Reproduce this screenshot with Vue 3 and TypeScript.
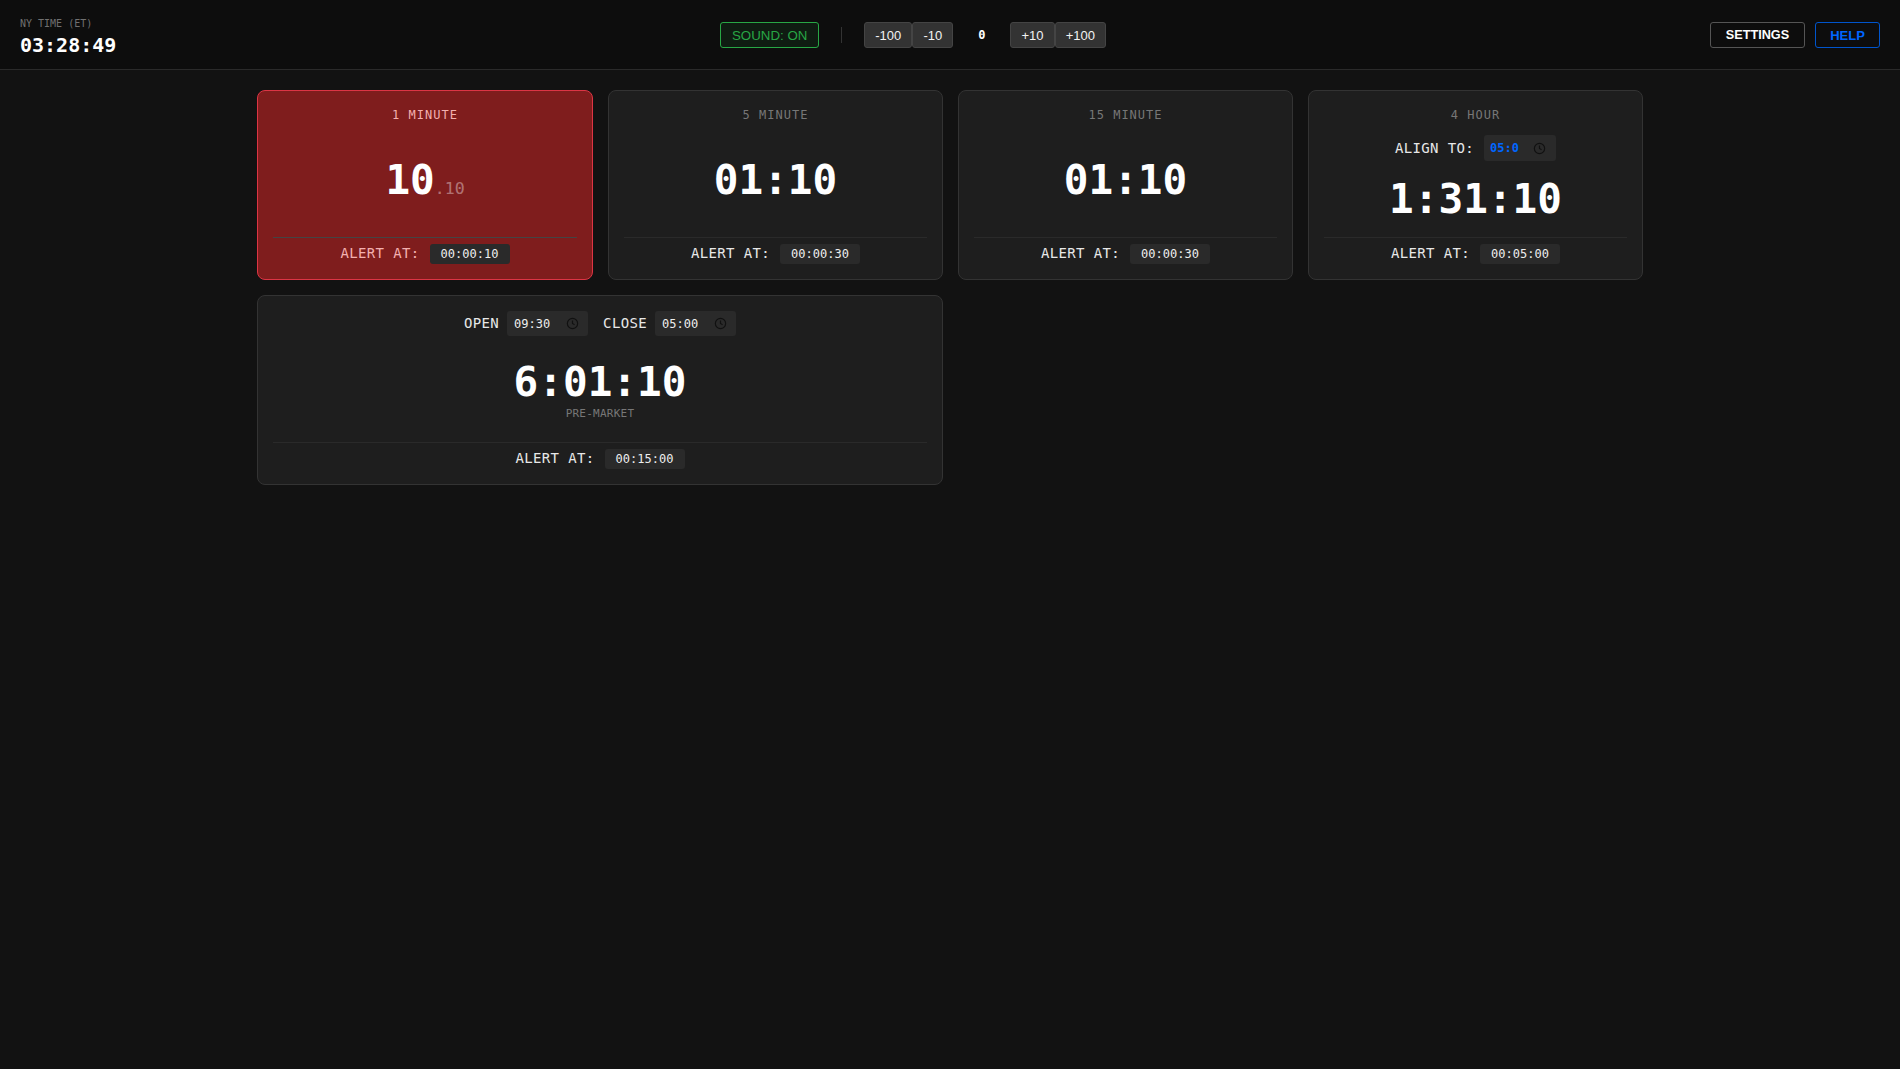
<script setup lang="ts">
const simple = [
  { title: '1 MINUTE', alert: '00:00:10', alarm: true, main: '10', frac: '.10' },
  { title: '5 MINUTE', alert: '00:00:30', alarm: false, main: '01:10', frac: '' },
  { title: '15 MINUTE', alert: '00:00:30', alarm: false, main: '01:10', frac: '' },
]
</script>

<template>
  <div class="page">
    <header class="bar">
      <div class="clock">
        <div class="clock-label">NY TIME (ET)</div>
        <div class="clock-time">03:28:49</div>
      </div>
      <div class="center">
        <button class="btn sound">SOUND: ON</button>
        <span class="sep"></span>
        <div class="adjust">
          <div class="group">
            <button class="btn step">-100</button>
            <button class="btn step">-10</button>
          </div>
          <span class="offset">0</span>
          <div class="group">
            <button class="btn step">+10</button>
            <button class="btn step">+100</button>
          </div>
        </div>
      </div>
      <div class="right">
        <button class="btn settings">SETTINGS</button>
        <button class="btn help">HELP</button>
      </div>
    </header>

    <main class="grid">
      <section v-for="c in simple" :key="c.title" class="card" :class="{ alarm: c.alarm }">
        <div class="title">{{ c.title }}</div>
        <div class="body">
          <div class="timer">{{ c.main }}<span v-if="c.frac" class="frac">{{ c.frac }}</span></div>
        </div>
        <div class="foot">
          <span class="label">ALERT AT:</span>
          <span class="field alert-field">{{ c.alert }}</span>
        </div>
      </section>

      <section class="card">
        <div class="title">4 HOUR</div>
        <div class="row align-row">
          <span class="label">ALIGN TO:</span>
          <span class="field time-field narrow">
            <span class="val blue">05:0</span>
            <svg class="ico" viewBox="0 0 24 24"><circle cx="12" cy="12" r="9.5" /><path d="M12 6.5V12l3.8 2.3" /></svg>
          </span>
        </div>
        <div class="body">
          <div class="timer">1:31:10</div>
        </div>
        <div class="foot">
          <span class="label">ALERT AT:</span>
          <span class="field alert-field">00:05:00</span>
        </div>
      </section>

      <section class="card wide">
        <div class="row session-row">
          <span class="label">OPEN</span>
          <span class="field time-field">
            <span class="val">09:30</span>
            <svg class="ico" viewBox="0 0 24 24"><circle cx="12" cy="12" r="9.5" /><path d="M12 6.5V12l3.8 2.3" /></svg>
          </span>
          <span class="label close">CLOSE</span>
          <span class="field time-field">
            <span class="val">05:00</span>
            <svg class="ico" viewBox="0 0 24 24"><circle cx="12" cy="12" r="9.5" /><path d="M12 6.5V12l3.8 2.3" /></svg>
          </span>
        </div>
        <div class="body">
          <div class="timer">6:01:10</div>
          <div class="status">PRE-MARKET</div>
        </div>
        <div class="foot">
          <span class="label">ALERT AT:</span>
          <span class="field alert-field">00:15:00</span>
        </div>
      </section>
    </main>
  </div>
</template>

<style>
html, body { margin: 0; background: #121212; }
</style>

<style scoped>
.page {
  min-height: 1069px;
  background: #121212;
  color: #fff;
  font-family: "DejaVu Sans Mono", monospace;
}
.bar {
  height: 68px;
  padding: 1px 20px 0;
  border-bottom: 1px solid #2a2a2a;
  background: #0d0d0d;
  display: flex;
  align-items: center;
  justify-content: space-between;
}
.clock { margin-top: 5px; }
.clock-label { font-size: 10px; line-height: 12px; color: #707070; }
.clock-time { font-size: 20px; line-height: 24px; font-weight: 700; margin-top: 3px; }
.center { display: flex; align-items: center; }
.btn {
  font-family: "Liberation Sans", Arial, sans-serif;
  height: 26px;
  box-sizing: border-box;
  border-radius: 3px;
  font-size: 13px;
  white-space: nowrap;
  cursor: pointer;
}
.sound {
  width: 99px;
  padding: 0;
  font-size: 13.3px;
  color: #28a745;
  background: rgba(40, 167, 69, 0.1);
  border: 1px solid #28a745;
}
.sep { width: 1px; height: 16px; background: #333; margin: 0 22px; }
.adjust { display: flex; align-items: center; }
.group { display: flex; }
.step {
  color: #f2f2f2;
  background: #333;
  border: 1px solid #444;
  padding: 0 10.1px;
}
.offset {
  width: 57px;
  text-align: center;
  font-size: 12px;
  font-weight: 700;
}
.right { display: flex; gap: 10px; }
.settings {
  width: 95px;
  padding: 0;
  font-size: 12.7px;
  font-weight: 700;
  color: #fff;
  background: transparent;
  border: 1px solid #555;
}
.help {
  width: 65px;
  padding: 0;
  font-weight: 700;
  color: #0066ff;
  background: transparent;
  border: 1px solid #0055cc;
}
.grid {
  width: 1386px;
  margin: 0 auto;
  padding-top: 20px;
  display: grid;
  grid-template-columns: 336px 335px 335px 335px;
  gap: 15px;
}
.card {
  height: 190px;
  box-sizing: border-box;
  background: #1e1e1e;
  border: 1px solid #333;
  border-radius: 8px;
  padding: 15px;
  display: flex;
  flex-direction: column;
  align-items: center;
}
.card.wide { grid-column: span 2; }
.card.alarm { background: #7f1d1d; border-color: #dc3545; }
.title {
  font-size: 12px;
  line-height: 18px;
  letter-spacing: 1px;
  color: #777;
}
.alarm .title { color: #f3b0b0; }
.body {
  flex: 1;
  padding-bottom: 2px;
  display: flex;
  flex-direction: column;
  align-items: center;
  justify-content: center;
}
.align-row + .body,
.session-row + .body { padding-bottom: 0; }
.timer {
  font-size: 41px;
  line-height: 48px;
  font-weight: 700;
}
.frac {
  font-size: 16.5px;
  line-height: 0;
  font-weight: 400;
  color: rgba(255, 255, 255, 0.4);
}
.status { font-size: 11px; line-height: 13px; margin-top: 1px; letter-spacing: 0.25px; color: #777; }
.foot {
  align-self: stretch;
  height: 21px;
  padding-top: 5px;
  border-top: 1px solid #2a2a2a;
  display: flex;
  justify-content: center;
  align-items: center;
  gap: 10px;
  margin-top: auto;
}
.alarm .foot { border-top-color: #444; }
.label { font-size: 14px; line-height: 17px; letter-spacing: 0.35px; color: #e8e8e8; }
.alarm .label { color: #f3b0b0; }
.field {
  background: #2a2a2a;
  border-radius: 3px;
  font-size: 12px;
  color: #eee;
  display: flex;
  align-items: center;
  height: 20px;
  box-sizing: border-box;
}
.alert-field { width: 80px; justify-content: center; }
.row { display: flex; align-items: center; gap: 8px; }
.time-field { width: 81px; height: 25px; padding: 0 9px 0 7px; justify-content: space-between; }
.time-field.narrow { width: 72px; height: 26px; padding: 0 10px 0 6px; }
.val { overflow: hidden; white-space: nowrap; }
.blue { color: #0066ff; font-weight: 700; }
.ico { width: 13px; height: 13px; flex: none; fill: none; stroke: #111; stroke-width: 2.2; }
.session-row .close { margin-left: 7px; }
.align-row { margin-top: 11px; gap: 10px; }
</style>
